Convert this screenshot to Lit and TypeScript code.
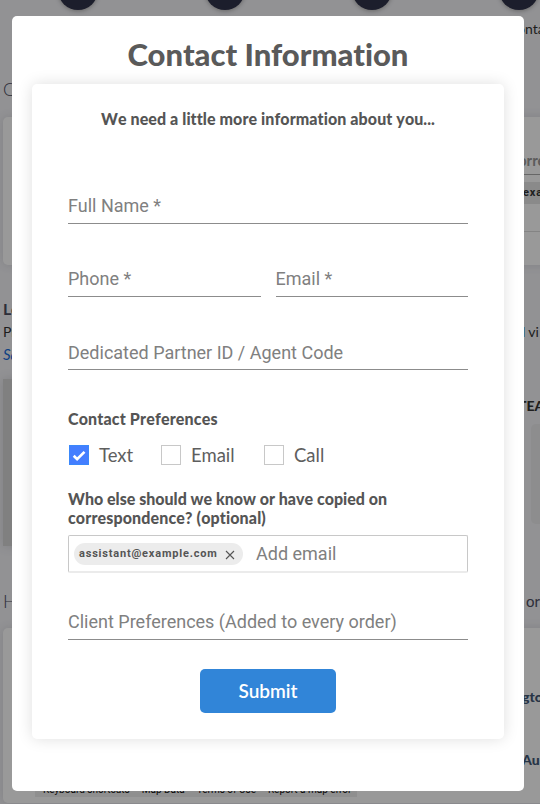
import { LitElement, html, css } from "lit";
import { customElement, property } from "lit/decorators.js";

/* The order page that sits behind the dialog. */
@customElement("order-page")
class OrderPage extends LitElement {
  static styles = css`
    :host { display: block; box-sizing: border-box; width: 540px; height: 804px; overflow: hidden; background: #f3f3f7; color: #4b4d5f; font: 17px/20px Lato, sans-serif; font-variant-ligatures: none; white-space: nowrap; }
    .steps { display: flex; gap: 107px; height: 10px; align-items: flex-end; padding-left: 58px; }
    .steps i { flex: none; width: 40px; height: 40px; border-radius: 50%; background: #30324a; box-shadow: 0 1px 4px #aaa; }
    .row { display: flex; justify-content: space-between; padding-left: 3px; }
    .tail { flex: none; width: 23px; }
    .r1 { height: 60px; padding-top: 9px; box-sizing: border-box; font-size: 14px; color: #333; }
    .r2 { height: 47px; padding-top: 9px; box-sizing: border-box; font-weight: 300; font-size: 18px; }
    .card { margin-left: 3px; width: 560px; box-sizing: border-box; background: #fff; border-radius: 5px; box-shadow: 0 0 10px #d8d8dc; }
    .contact { height: 148px; padding: 33px 0 0 515px; }
    .label { height: 24px; font: 700 15px/20px Lato; color: #999; border-bottom: 1px solid #aaa; }
    .chip { height: 22px; margin-top: 7px; background: #e6e6e6; font: 700 11px/22px Roboto; letter-spacing: 0.8px; color: #333; padding-left: 5px; }
    .rule { margin-top: 27px; height: 1px; background: #ddd; }
    .r3 { height: 23px; padding-top: 34px; }
    .r3 b { font-size: 16px; }
    .r4 { height: 22px; font-size: 14px; color: #333; }
    .r4 .tail { width: 18px; }
    .r4 .tail b { color: #29598c; font-weight: 400; margin-right: 3px; }
    .r5 { height: 35px; font-size: 15px; font-style: italic; color: #176bda; }
    .r6 { height: 167px; }
    .map { width: 300px; background: #d6d6d6; box-shadow: 0 0 10px #d4d4d8; }
    .team { flex: none; width: 22px; padding-top: 17px; font: 900 14px/20px Lato; color: #333; }
    .note { margin: 8px 0 0 13px; width: 20px; height: 100px; border-radius: 5px; background: #ebebed; }
    .r7 { height: 82px; padding-top: 45px; box-sizing: border-box; font-weight: 300; font-size: 18px; }
    .r7 .tail { width: 14px; font-size: 15px; font-weight: 400; }
    .orders { height: 175px; padding-left: 32px; display: flex; flex-direction: column; font: 900 14px/20px Lato; color: #415775; }
    .o1 { margin: 59px 0 0 487px; }
    .o2 { margin: 43px 0 0 487px; }
    .attribution { display: flex; width: 322px; margin-top: 13px; height: 14px; font: 10px/14px Roboto; color: #111; background: #eee; gap: 12px; padding-left: 8px; box-sizing: border-box; }
  `;
  render() {
    return html`
      <div class="steps"><i></i><i></i><i></i><i></i></div>
      <div class="row r1"><span></span><span class="tail">onta</span></div>
      <div class="row r2"><span>Contact</span></div>
      <div class="card contact">
        <div class="label">orre</div>
        <div class="chip">exa</div>
        <div class="rule"></div>
      </div>
      <div class="row r3"><b>Location</b></div>
      <div class="row r4"><span>Property</span><span class="tail"><b>l</b>vi</span></div>
      <div class="row r5"><span>Sample</span></div>
      <div class="row r6">
        <div class="map"></div>
        <div class="team">TEA<div class="note"></div></div>
      </div>
      <div class="row r7"><span>History</span><span class="tail">or</span></div>
      <div class="card orders">
        <div class="o1">gto</div>
        <div class="o2">Au</div>
        <div class="attribution"><span>Keyboard shortcuts</span><span>Map Data</span><span>Terms of Use</span><span>Report a map error</span></div>
      </div>
    `;
  }
}

@customElement("line-field")
class LineField extends LitElement {
  @property() label = "";
  static styles = css`
    :host { display: block; min-width: 0; height: 37px; box-sizing: border-box; border-bottom: 1px solid #8c8c8c; font: 400 18px/38px Roboto, sans-serif; color: #808080; white-space: nowrap; }
  `;
  render() {
    return html`${this.label}`;
  }
}

@customElement("check-option")
class CheckOption extends LitElement {
  @property() label = "";
  @property({ type: Boolean }) checked = false;
  static styles = css`
    :host { display: flex; align-items: center; height: 20px; font: 400 18.5px/20px Lato, sans-serif; color: #5e5e5e; }
    .box { width: 20px; height: 20px; box-sizing: border-box; border: 1px solid #c8c8c8; margin-right: 10px; }
    .on { border: 1px solid #3a88fb; background: #447eff; }
    svg { display: block; width: 18px; height: 18px; }
  `;
  render() {
    return html`<div class="box ${this.checked ? "on" : ""}">
        ${this.checked
          ? html`<svg viewBox="0 0 18 18"><path d="M3.7 9.8 7.1 13.1 14.5 5.9" fill="none" stroke="#fff" stroke-width="2.7" /></svg>`
          : ""}
      </div>
      <span>${this.label}</span>`;
  }
}

@customElement("app-root")
class AppRoot extends LitElement {
  static styles = css`
    :host { display: grid; width: 540px; height: 804px; overflow: hidden; font-family: Lato, sans-serif; color: #555; }
    order-page, .overlay { grid-area: 1 / 1; }
    .overlay { z-index: 1; box-sizing: border-box; padding: 16px 16px 13px 12px; background: rgba(0, 0, 0, 0.4); }
    .modal { height: 775px; box-sizing: border-box; padding: 16px 20px 0; background: #fff; border-radius: 5px; }
    h1, h2, .intro { font-variant-ligatures: none !important; }
    h2, .intro { font-kerning: none !important; }
    h1 { margin: 0 0 8px; text-align: center; font: 900 31px/44px Lato, sans-serif; color: #5a5a5a; }
    .panel { height: 655px; box-sizing: border-box; padding: 25px 36px 0; border-radius: 5px; background: #fff; box-shadow: 0 0 15px rgba(0, 0, 0, 0.13); display: flex; flex-direction: column; }
    .intro { text-align: center; font: 900 16px/20px Lato, sans-serif; letter-spacing: 0.08px; margin-bottom: 58px; }
    .fields { display: flex; flex-direction: column; gap: 36px; }
    .pair { display: flex; gap: 15px; }
    .pair > line-field { flex: 1; }
    .agent { line-height: 39px; }
    h2 { margin: 0; font: 900 16px/19px Lato, sans-serif; }
    .prefs { margin-top: 39px; letter-spacing: 0.15px; }
    .checks { display: flex; margin: 17px 0 0 1px; }
    .checks > :nth-child(1) { width: 92px; }
    .checks > :nth-child(2) { width: 103px; }
    .who { margin-top: 24px; }
    .who span { letter-spacing: 0.13px; }
    .copied { display: flex; align-items: center; height: 38px; margin-top: 8px; box-sizing: border-box; border: 1px solid #c8c8c8; border-bottom: 2px solid #ebebeb; border-radius: 2px; padding-left: 5px; font: 400 18px/36px Roboto, sans-serif; color: #808080; }
    .pill { display: flex; align-items: center; width: 169px; height: 22px; box-sizing: border-box; margin-right: 13px; padding-left: 5px; border-radius: 11px; background: #ececec; font: 700 11px/22px Roboto, sans-serif; letter-spacing: 0.8px; color: #555; }
    .pill svg { width: 10px; height: 10px; margin: 2px 0 0 7px; }
    .client { flex: none; margin-top: 30px; }
    button { align-self: center; flex: none; width: 136px; height: 44px; margin-top: 29px; padding: 0; border: 0; border-radius: 5px; background: #3185d8; color: #fff; font: 600 19px/44px Lato, sans-serif; }
  `;
  render() {
    return html`
      <order-page></order-page>
      <div class="overlay">
        <div class="modal">
          <h1>Contact Information</h1>
          <div class="panel">
            <div class="intro">We need a little more information about you...</div>
            <div class="fields">
              <line-field label="Full Name *"></line-field>
              <div class="pair">
                <line-field label="Phone *"></line-field>
                <line-field label="Email *"></line-field>
              </div>
              <line-field class="agent" label="Dedicated Partner ID / Agent Code"></line-field>
            </div>
            <h2 class="prefs">Contact Preferences</h2>
            <div class="checks">
              <check-option label="Text" checked></check-option>
              <check-option label="Email"></check-option>
              <check-option label="Call"></check-option>
            </div>
            <h2 class="who">Who else should we know or have copied on <span>correspondence? (optional)</span></h2>
            <div class="copied">
              <div class="pill">
                <span>assistant@example.com</span>
                <svg viewBox="0 0 10 10"><path d="M1 1 9 9M9 1 1 9" fill="none" stroke="#555" stroke-width="1.1" /></svg>
              </div>
              <span>Add email</span>
            </div>
            <line-field class="client" label="Client Preferences (Added to every order)"></line-field>
            <button>Submit</button>
          </div>
        </div>
      </div>
    `;
  }
}
